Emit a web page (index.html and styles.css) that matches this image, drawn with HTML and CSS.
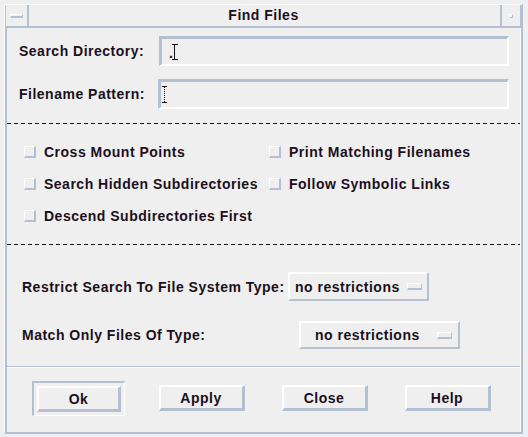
FILE: index.html
```html
<!DOCTYPE html>
<html>
<head>
<meta charset="utf-8">
<link rel="stylesheet" href="styles.css">
</head>
<body>
<div class="win">
  <div class="titlebar">
    <div class="tb-menu"><span class="dash"></span></div>
    <div class="tb-title">Find Files</div>
    <div class="tb-max"><span class="dot"></span></div>
  </div>
  <div class="content">
    <div class="fields">
      <div class="field-row">
        <label class="lbl lbl1">Search Directory:</label>
        <div class="field f1"><span class="dotch">.</span><span class="ibeam"></span></div>
      </div>
      <div class="field-row row2">
        <label class="lbl">Filename Pattern:</label>
        <div class="field f2"><span class="ibeam dotted"></span></div>
      </div>
    </div>
    <div class="dashed"></div>
    <div class="checks">
      <div class="chk"><span class="box"></span>Cross Mount Points</div>
      <div class="chk"><span class="box"></span>Print Matching Filenames</div>
      <div class="chk"><span class="box"></span>Search Hidden Subdirectories</div>
      <div class="chk"><span class="box"></span>Follow Symbolic Links</div>
      <div class="chk"><span class="box"></span>Descend Subdirectories First</div>
    </div>
    <div class="dashed"></div>
    <div class="options">
      <div class="opt-row">
        <span class="lbl ol1">Restrict Search To File System Type:</span>
        <div class="optbtn ob1">no restrictions<span class="ind"></span></div>
      </div>
      <div class="opt-row r2">
        <span class="lbl ol2">Match Only Files Of Type:</span>
        <div class="optbtn ob2">no restrictions<span class="ind"></span></div>
      </div>
    </div>
    <div class="actions">
      <div class="cell"><div class="ring"><div class="btn">Ok</div></div></div>
      <div class="cell"><div class="btn">Apply</div></div>
      <div class="cell"><div class="btn">Close</div></div>
      <div class="cell"><div class="btn">Help</div></div>
    </div>
  </div>
</div>
</body>
</html>
```
FILE: styles.css
```css
* { box-sizing: border-box; }
html, body { margin: 0; padding: 0; }
body {
  background: #efefef;
  width: 528px;
  height: 437px;
  overflow: hidden;
  font-family: "Liberation Sans", Arial, sans-serif;
  font-weight: bold;
  font-size: 14px;
  letter-spacing: 0.5px;
  color: #1c0f1c;
}
.win {
  margin: 4px 0 0 4px;
  width: 519px;
  height: 430px;
  border-right: 2px solid #b4c0d0;
  border-bottom: 2px solid #b4c0d0;
  border-left: 1px solid #ffffff;
  border-top: 1px solid #ffffff;
  display: flex;
  flex-direction: column;
}
.titlebar {
  height: 23px;
  display: flex;
  border-bottom: 2px solid #b4c0d0;
  border-left: 1px solid #b4c0d0;
}
.tb-menu {
  width: 23px;
  border-right: 2px solid #b4c0d0;
  display: flex;
  align-items: center;
  justify-content: center;
}
.dash {
  width: 13px;
  height: 4px;
  border-top: 1px solid #ffffff;
  border-left: 1px solid #ffffff;
  border-bottom: 2px solid #b4c0d0;
  border-right: 1px solid #b4c0d0;
}
.tb-title {
  flex: 1;
  text-align: center;
  line-height: 21px;
  font-size: 14px;
  padding-right: 2px;
}
.tb-max {
  width: 21px;
  border-left: 2px solid #b4c0d0;
  border-right: 1px solid #b4c0d0;
  display: flex;
  align-items: center;
  justify-content: center;
}
.dot {
  width: 4px;
  height: 4px;
  border-top: 1px solid #ffffff;
  border-left: 1px solid #ffffff;
  border-bottom: 1px solid #b4c0d0;
  border-right: 1px solid #b4c0d0;
}
.content {
  flex: 1;
  display: flex;
  flex-direction: column;
  border-left: 2px solid #b4c0d0;
  border-right: 1px solid #ffffff;
}
.fields {
  padding: 8px 11px 0 12px;
  display: flex;
  flex-direction: column;
  gap: 13px;
}
.field-row {
  display: flex;
  align-items: center;
  justify-content: space-between;
}
.field {
  height: 30px;
  width: 350px;
  border-top: 3px solid #b4c0d0;
  border-left: 3px solid #b4c0d0;
  border-bottom: 2px solid #ffffff;
  border-right: 2px solid #ffffff;
  display: flex;
  align-items: center;
  position: relative;
}
.row2 .field { width: 351px; }
.dotch {
  margin-left: 7px;
  font-weight: bold;
  line-height: 1;
  margin-top: 3px;
  letter-spacing: 0;
}
.ibeam {
  position: relative;
  width: 6px;
  height: 16px;
  border-top: 1px solid #1c0f1c;
  border-bottom: 1px solid #1c0f1c;
}
.ibeam::before {
  content: "";
  position: absolute;
  left: 2px;
  top: 0;
  bottom: 0;
  border-left: 1px solid #1c0f1c;
}
.f1 .ibeam { margin-left: -1px; }
.ibeam.dotted {
  margin-left: 1px;
  width: 5px;
  height: 17px;
}
.ibeam.dotted::before {
  left: 2px;
  border-left: 1px dotted #1c0f1c;
}
.dashed {
  height: 1px;
  margin-top: 14px;
  background: repeating-linear-gradient(90deg, #1c0f1c 0 4px, transparent 4px 7px);
}
.checks {
  display: grid;
  grid-template-columns: 245px 1fr;
  grid-auto-rows: 32px;
  padding: 12px 0 0 17px;
}
.chk {
  display: flex;
  align-items: center;
  gap: 8px;
}
.box {
  width: 12px;
  height: 12px;
  border-top: 1px solid #ffffff;
  border-left: 1px solid #ffffff;
  border-right: 2px solid #b4c0d0;
  border-bottom: 2px solid #b4c0d0;
}
.checks + .dashed { margin-top: 12px; }
.options {
  padding: 27px 0 0 15px;
  display: flex;
  flex-direction: column;
  gap: 20px;
}
.opt-row {
  display: flex;
  align-items: center;
}
.ol1 { width: 266px; }
.ol2 { width: 277px; }
.optbtn {
  height: 29px;
  display: flex;
  align-items: center;
  border-top: 2px solid #ffffff;
  border-left: 2px solid #ffffff;
  border-right: 2px solid #b4c0d0;
  border-bottom: 2px solid #b4c0d0;
}
.ob1 { width: 141px; padding-left: 5px; }
.ob2 { width: 161px; height: 28px; padding-left: 14px; }
.ind {
  width: 15px;
  height: 7px;
  border-top: 1px solid #ffffff;
  border-left: 1px solid #ffffff;
  border-right: 1px solid #b4c0d0;
  border-bottom: 2px solid #b4c0d0;
  margin-left: 7px;
}
.ob2 .ind { margin-left: 17px; }
.actions {
  margin-top: 17px;
  border-top: 1px solid #b4c0d0;
  box-shadow: inset 0 1px 0 #ffffff;
  flex: 1;
  display: grid;
  grid-template-columns: repeat(4, 123px);
  padding: 14px 0 0 10px;
  align-items: start;
}
.cell {
  display: flex;
  justify-content: center;
  padding-top: 4px;
}
.cell:first-child { padding-top: 0; }
.ring {
  padding: 3px;
  border-top: 2px solid #b4c0d0;
  border-left: 2px solid #b4c0d0;
  border-bottom: 1px solid #ffffff;
  border-right: 1px solid #ffffff;
}
.btn {
  width: 86px;
  height: 26px;
  display: flex;
  align-items: center;
  justify-content: center;
  border-top: 2px solid #ffffff;
  border-left: 2px solid #ffffff;
  border-right: 3px solid #b4c0d0;
  border-bottom: 3px solid #b4c0d0;
}
.ring .btn { width: 84px; }
```
